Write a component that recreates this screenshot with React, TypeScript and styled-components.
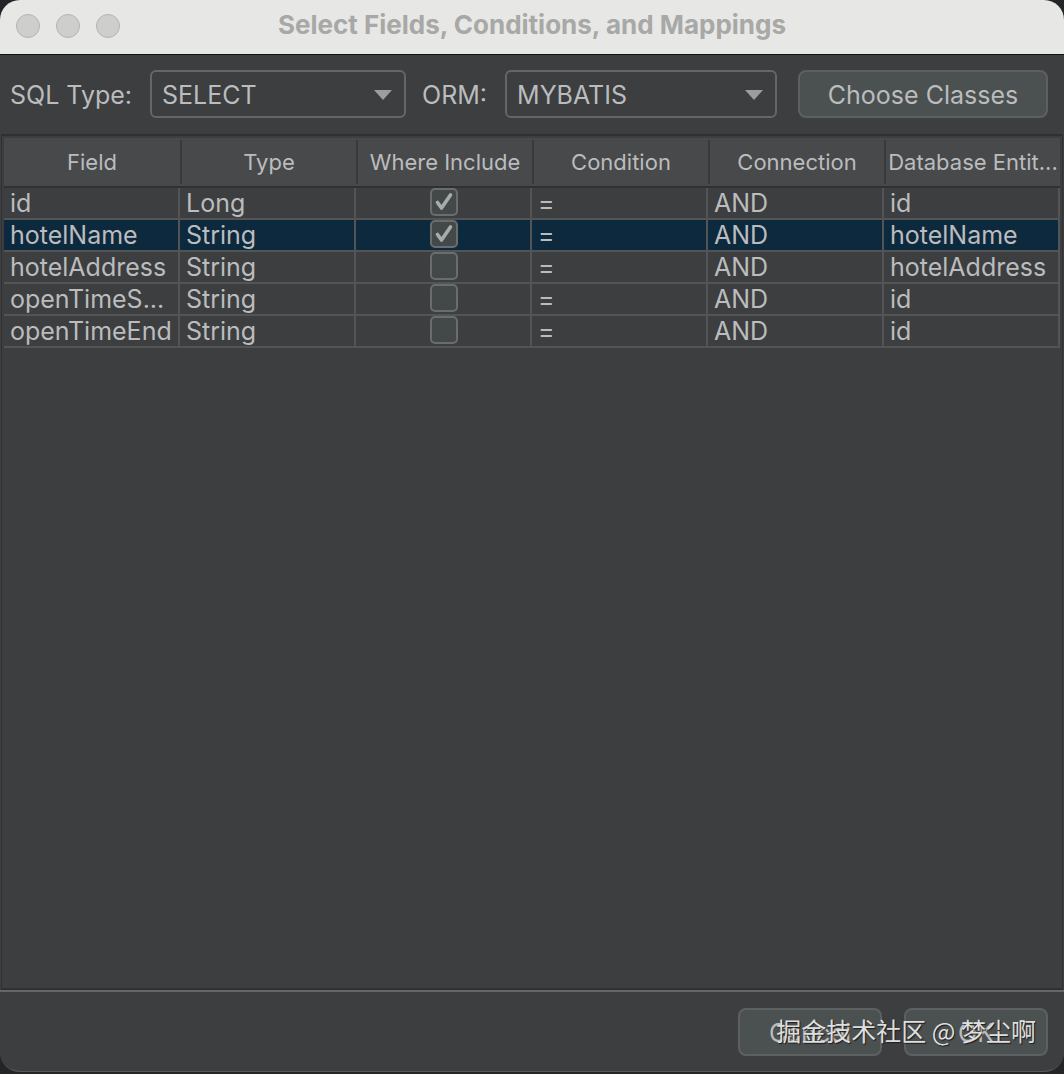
import React, { useState } from "react";
import styled, { createGlobalStyle } from "styled-components";

const color = {
  panel: "#3c3e40",
  header: "#47494b",
  text: "#bbbcbd",
  line: "#525456",
  dark: "#2f3133",
  control: "#4b5051",
  controlBorder: "#5d6061",
  fieldBorder: "#646667",
  selection: "#0d293e",
};

const GlobalStyle = createGlobalStyle`
  *, *::before, *::after { box-sizing: border-box; }
  body {
    margin: 0;
    background: #242526;
    color: ${color.text};
    font: 400 25px/32px Inter, "Liberation Sans", sans-serif;
  }
`;

const Window = styled.div`
  display: flex;
  flex-direction: column;
  height: calc(100vh - 2px);
  margin-bottom: 2px;
  background: ${color.panel};
  border-bottom: 1px solid #58595a;
  border-radius: 20px;
  overflow: hidden;
`;

const TitleBar = styled.header`
  display: grid;
  grid-template-columns: 1fr auto 1fr;
  align-items: center;
  height: 55px;
  padding: 0 16px 3px;
  background: #e7e7e5;
  border-bottom: 1px solid #121314;
`;

const WindowControls = styled.div`
  display: flex;
  gap: 16px;
`;

const WindowControl = styled.button`
  width: 24px;
  height: 24px;
  padding: 0;
  border: 1px solid #b4b4b2;
  border-radius: 50%;
  background: #cececc;
`;

const Title = styled.h1`
  margin: 0;
  padding-bottom: 2px;
  color: #a8a8a6;
  font-size: 26px;
  line-height: 32px;
  font-weight: 700;
`;

const Toolbar = styled.div`
  display: flex;
  align-items: center;
  gap: 16px;
  padding: 15px 16px 16px 10px;
`;

const Field = styled.div`
  display: flex;
  align-items: center;
  gap: 18px;
  white-space: nowrap;
`;

const Label = styled.label`
  padding-top: 2px;
`;

const SelectBox = styled.div<{ $width: number }>`
  display: grid;
  grid-template-columns: 1fr 36px;
  align-items: center;
  width: ${(p) => p.$width}px;
`;

const Select = styled.select`
  grid-area: 1 / 1 / 2 / 3;
  height: 48px;
  padding: 2px 36px 0 10px;
  appearance: none;
  border: 2px solid ${color.fieldBorder};
  border-radius: 6px;
  background: ${color.panel};
  color: inherit;
  font: inherit;
`;

const Arrow = styled.svg`
  grid-area: 1 / 2;
  width: 18px;
  height: 10px;
  margin-left: 4px;
  margin-top: 2px;
  pointer-events: none;
`;

const Button = styled.button<{ $wide?: boolean }>`
  width: ${(p) => (p.$wide ? 250 : 144)}px;
  height: 48px;
  padding: 2px 0 0;
  border: 2px solid ${color.controlBorder};
  border-radius: 8px;
  background: ${color.control};
  color: inherit;
  font: inherit;
`;

const ToolbarEnd = styled.div`
  margin-left: auto;
`;

const TablePane = styled.main`
  flex: 1;
  padding: 2px 2px 0;
  border: 2px solid ${color.dark};
  border-left-width: 1px;
  border-right-width: 1px;
  margin: 0 1px;
`;

const Table = styled.table`
  width: 100%;
  table-layout: fixed;
  border-spacing: 0;
`;

const HeadCell = styled.th`
  height: 50px;
  padding: 2px 0;
  background: ${color.header};
  border-bottom: 2px solid ${color.dark};
  font-size: 22px;
  font-weight: 400;
  line-height: 44px;
  white-space: nowrap;

  & + & > span {
    border-left: 2px solid #37393b;
  }
`;

const HeadLabel = styled.span`
  display: block;
  height: 44px;
`;

const Row = styled.tr<{ $selected: boolean }>`
  background: ${(p) => (p.$selected ? color.selection : "transparent")};
`;

const Cell = styled.td`
  height: 32px;
  padding: 0 0 0 6px;
  border-right: 2px solid ${color.line};
  border-bottom: 2px solid ${color.line};
  line-height: 30px;
  white-space: nowrap;
`;

const CheckCell = styled(Cell)`
  padding: 0 0 2px 2px;
`;

const CheckBox = styled.span`
  display: grid;
  width: 28px;
  height: 28px;
  margin: 0 auto;
`;

const CheckInput = styled.input`
  grid-area: 1 / 1;
  width: 28px;
  height: 28px;
  margin: 0;
  appearance: none;
  border: 2px solid #6a6d6d;
  border-radius: 5px;
  background: #434949;
`;

const CheckMark = styled.svg`
  grid-area: 1 / 1;
  width: 28px;
  height: 28px;
  pointer-events: none;
`;

const Footer = styled.footer`
  display: flex;
  justify-content: flex-end;
  gap: 22px;
  padding: 16px 16px 15px;
  border-top: 2px solid #646668;
`;

const Watermark = styled.div`
  position: absolute;
  right: 28px;
  bottom: 26px;
  color: #dededd;
  font: 400 25px/36px "Noto Sans CJK SC", sans-serif;
  text-shadow: 1px 1px 1px #1c1d1e;
  white-space: nowrap;
  pointer-events: none;
`;

interface Mapping {
  field: string;
  type: string;
  include: boolean;
  entity: string;
}

const initialRows: Mapping[] = [
  { field: "id", type: "Long", include: true, entity: "id" },
  { field: "hotelName", type: "String", include: true, entity: "hotelName" },
  { field: "hotelAddress", type: "String", include: false, entity: "hotelAddress" },
  { field: "openTimeS...", type: "String", include: false, entity: "id" },
  { field: "openTimeEnd", type: "String", include: false, entity: "id" },
];

const columns = ["Field", "Type", "Where Include", "Condition", "Connection", "Database Entit..."];

interface DropdownProps {
  id: string;
  label: string;
  width: number;
  value: string;
}

function Dropdown({ id, label, width, value }: DropdownProps) {
  return (
    <Field>
      <Label htmlFor={id}>{label}</Label>
      <SelectBox $width={width}>
        <Select id={id} defaultValue={value}>
          <option value={value}>{value}</option>
        </Select>
        <Arrow viewBox="0 0 18 10" aria-hidden="true">
          <path d="M0 0H18L9 10Z" fill="#9c9d9f" />
        </Arrow>
      </SelectBox>
    </Field>
  );
}

export default function App() {
  const [rows, setRows] = useState(initialRows);
  const [selected, setSelected] = useState(1);

  const toggle = (index: number) =>
    setRows(rows.map((row, i) => (i === index ? { ...row, include: !row.include } : row)));

  return (
    <>
      <GlobalStyle />
      <Window>
        <TitleBar>
          <WindowControls>
            <WindowControl aria-label="Close" />
            <WindowControl aria-label="Minimize" />
            <WindowControl aria-label="Zoom" />
          </WindowControls>
          <Title>Select Fields, Conditions, and Mappings</Title>
        </TitleBar>
        <Toolbar>
          <Dropdown id="sql-type" label="SQL Type:" width={256} value="SELECT" />
          <Dropdown id="orm" label="ORM:" width={272} value="MYBATIS" />
          <ToolbarEnd>
            <Button $wide>Choose Classes</Button>
          </ToolbarEnd>
        </Toolbar>
        <TablePane>
          <Table>
            <thead>
              <tr>
                {columns.map((name) => (
                  <HeadCell key={name} scope="col">
                    <HeadLabel>{name}</HeadLabel>
                  </HeadCell>
                ))}
              </tr>
            </thead>
            <tbody>
              {rows.map((row, i) => (
                <Row key={row.field} $selected={i === selected} onClick={() => setSelected(i)}>
                  <Cell>{row.field}</Cell>
                  <Cell>{row.type}</Cell>
                  <CheckCell>
                    <CheckBox>
                      <CheckInput
                        type="checkbox"
                        aria-label={`Include ${row.field}`}
                        checked={row.include}
                        onChange={() => toggle(i)}
                      />
                      {row.include && (
                        <CheckMark viewBox="0 0 28 28" aria-hidden="true">
                          <path
                            d="M7.5 14.5L11.5 20L20.5 7"
                            fill="none"
                            stroke="#a9abab"
                            strokeWidth="3.6"
                            strokeLinecap="round"
                            strokeLinejoin="round"
                          />
                        </CheckMark>
                      )}
                    </CheckBox>
                  </CheckCell>
                  <Cell>=</Cell>
                  <Cell>AND</Cell>
                  <Cell>{row.entity}</Cell>
                </Row>
              ))}
            </tbody>
          </Table>
        </TablePane>
        <Footer>
          <Button>Cancel</Button>
          <Button>OK</Button>
        </Footer>
        <Watermark>掘金技术社区 @ 梦尘啊</Watermark>
      </Window>
    </>
  );
}
